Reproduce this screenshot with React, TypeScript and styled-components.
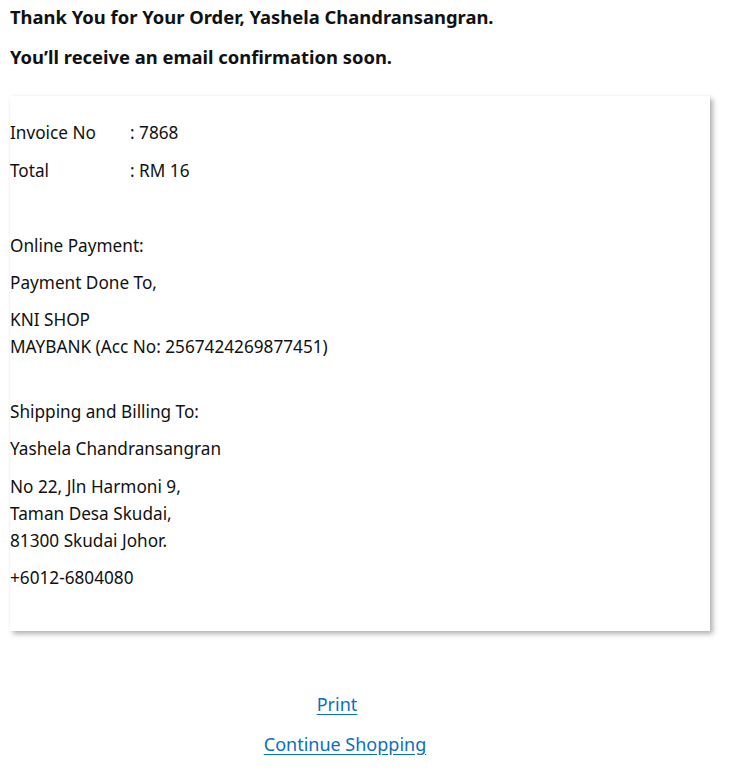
import React from "react";
import styled, { createGlobalStyle } from "styled-components";

const Global = createGlobalStyle`
  html, body { margin: 0; padding: 0; background: #fff; }
  body { font-family: "Noto Sans", "Open Sans", Arial, sans-serif; color: #111; }
`;

const Page = styled.div`
  padding: 0 20px 0 10px;
  width: 730px;
  box-sizing: border-box;
`;

const Heading = styled.h3<{ $top: number }>`
  margin: 0;
  font-size: 18.4px;
  font-weight: 700;
  line-height: 24px;
  color: #111;
  padding-top: ${(p) => p.$top}px;
`;

const Card = styled.div`
  margin-top: 27px;
  background: #fff;
  box-shadow: 3px 3px 5px rgba(0, 0, 0, 0.3), 0 0 2px rgba(0, 0, 0, 0.04);
  padding: 13px 0 30px 0;
`;

const Para = styled.p`
  margin: 10.4px 0;
  font-size: 17.2px;
  line-height: 27px;
  font-weight: 400;
  color: #111;
`;

const Row = styled.span`
  display: grid;
  grid-template-columns: 120px 1fr;
`;

const Links = styled.div`
  margin-top: 60px;
  display: flex;
  flex-direction: column;
  align-items: center;
  gap: 14px;
  width: 670px;
`;

const Link = styled.a<{ $shift: number }>`
  color: #0a6fc2;
  font-size: 18px;
  line-height: 26px;
  text-decoration: underline;
  text-underline-offset: 3px;
  margin-right: ${(p) => p.$shift}px;
  cursor: pointer;
`;

export default function App() {
  return (
    <Page>
      <Global />
      <Heading $top={5}>Thank You for Your Order, Yashela Chandransangran.</Heading>
      <Heading $top={16}>You’ll receive an email confirmation soon.</Heading>
      <Card>
        <Para>
          <Row>
            <span>Invoice No</span>
            <span>: 7868</span>
          </Row>
        </Para>
        <Para>
          <Row>
            <span>Total</span>
            <span>: RM 16</span>
          </Row>
        </Para>
        <Para>&nbsp;</Para>
        <Para>Online Payment:</Para>
        <Para>Payment Done To,</Para>
        <Para>
          KNI SHOP
          <br />
          MAYBANK (Acc No: 2567424269877451)
          <br />
          &nbsp;
        </Para>
        <Para>Shipping and Billing To:</Para>
        <Para>Yashela Chandransangran</Para>
        <Para>
          No 22, Jln Harmoni 9,
          <br />
          Taman Desa Skudai,
          <br />
          81300 Skudai Johor.
        </Para>
        <Para>+6012-6804080</Para>
      </Card>
      <Links>
        <Link $shift={16}>Print</Link>
        <Link $shift={0}>Continue Shopping</Link>
      </Links>
    </Page>
  );
}
